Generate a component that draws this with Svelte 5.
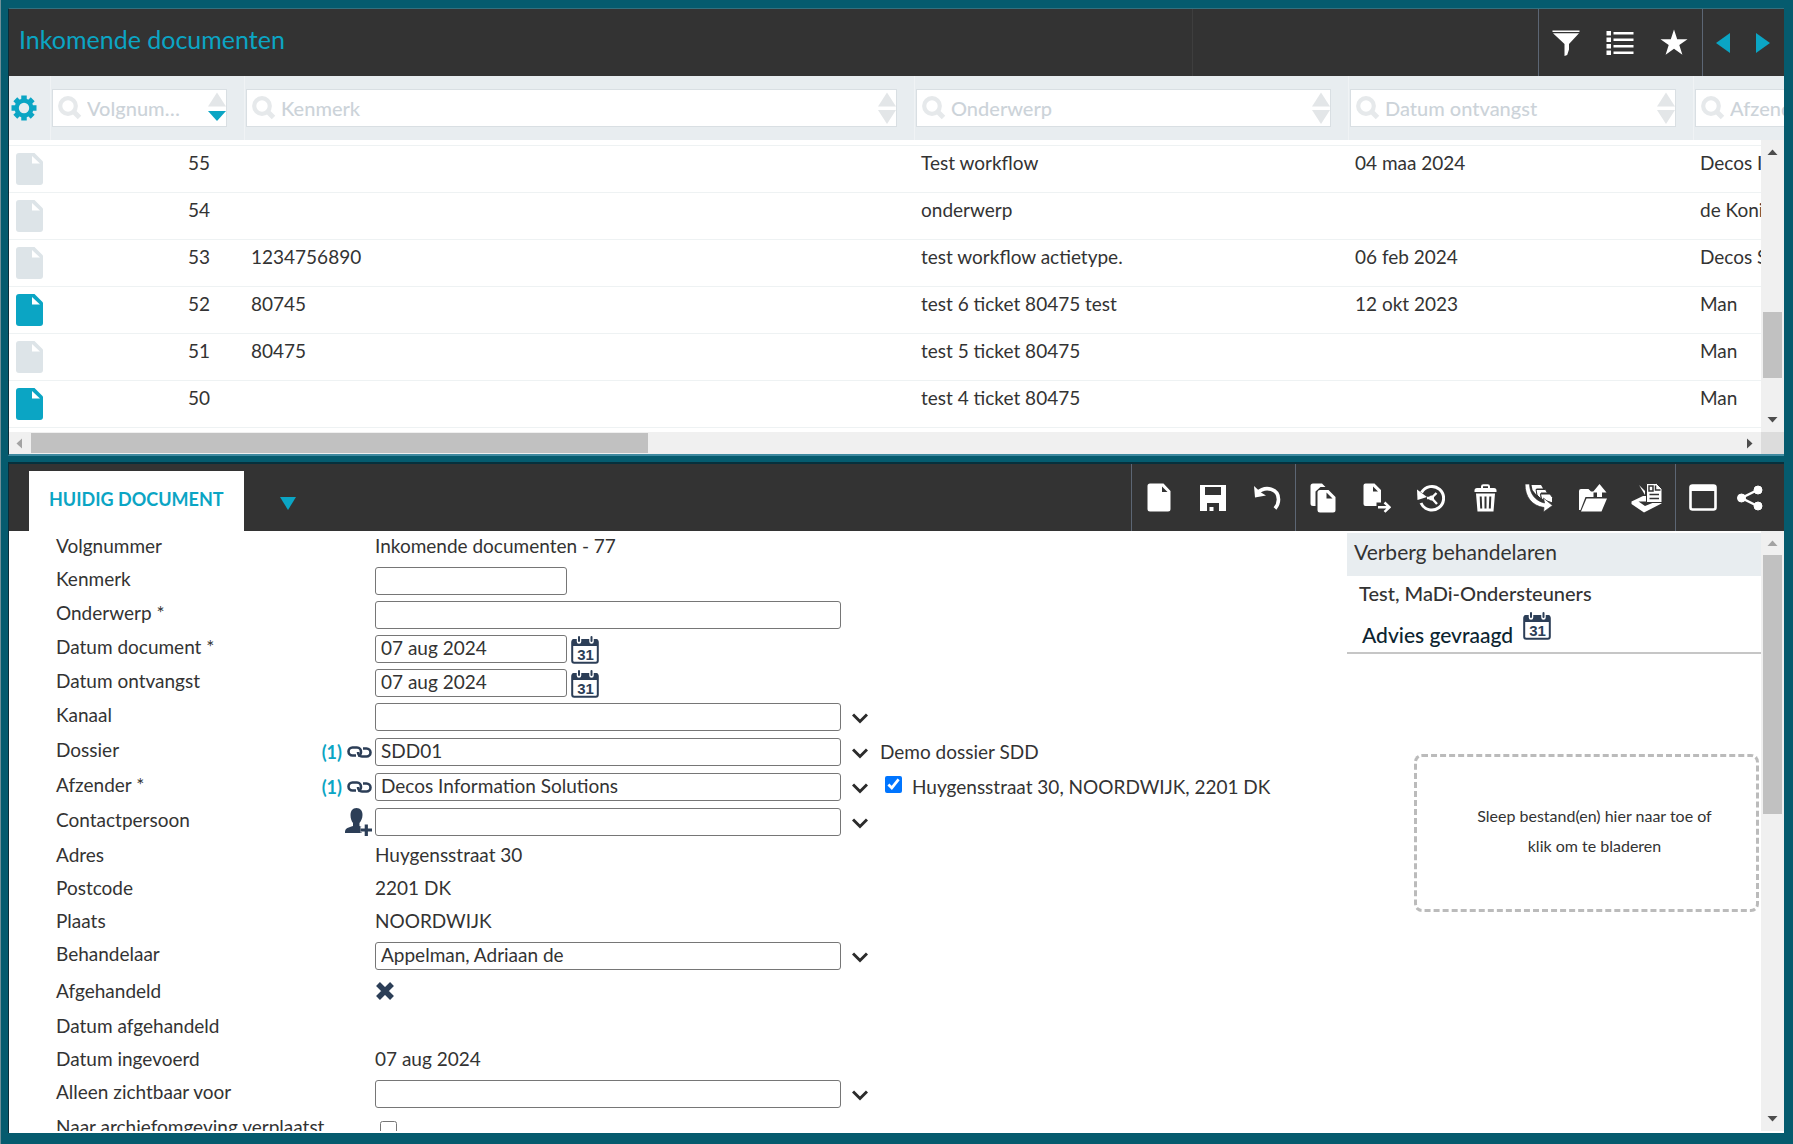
<script lang="ts">
    interface Column {
        key: string;
        label: string;
        sorted?: "down";
    }

    interface Field {
        id: string;
        label: string;
        kind: "text" | "short" | "long" | "date" | "lookup" | "cross" | "check";
        value?: string;
        links?: number;
        person?: boolean;
        note?: string;
        noteCheck?: boolean;
    }

    const columns: Column[] = [
        { key: "nr", label: "Volgnummer", sorted: "down" },
        { key: "kenmerk", label: "Kenmerk" },
        { key: "onderwerp", label: "Onderwerp" },
        { key: "ontvangst", label: "Datum ontvangst" },
        { key: "afzender", label: "Afzender" },
    ];

    const rows = [
        { nr: 55, kenmerk: "", onderwerp: "Test workflow", ontvangst: "04 maa 2024", afzender: "Decos Information", file: false },
        { nr: 54, kenmerk: "", onderwerp: "onderwerp", ontvangst: "", afzender: "de Koning", file: false },
        { nr: 53, kenmerk: "1234756890", onderwerp: "test workflow actietype.", ontvangst: "06 feb 2024", afzender: "Decos Solutions", file: false },
        { nr: 52, kenmerk: "80745", onderwerp: "test 6 ticket 80475 test", ontvangst: "12 okt 2023", afzender: "Man", file: true },
        { nr: 51, kenmerk: "80475", onderwerp: "test 5 ticket 80475", ontvangst: "", afzender: "Man", file: false },
        { nr: 50, kenmerk: "", onderwerp: "test 4 ticket 80475", ontvangst: "", afzender: "Man", file: true },
    ];

    let fields: Field[] = $state([
        { id: "volgnummer", label: "Volgnummer", kind: "text", value: "Inkomende documenten - 77" },
        { id: "kenmerk", label: "Kenmerk", kind: "short", value: "" },
        { id: "onderwerp", label: "Onderwerp *", kind: "long", value: "" },
        { id: "datum-document", label: "Datum document *", kind: "date", value: "07 aug 2024" },
        { id: "datum-ontvangst", label: "Datum ontvangst", kind: "date", value: "07 aug 2024" },
        { id: "kanaal", label: "Kanaal", kind: "lookup", value: "" },
        { id: "dossier", label: "Dossier", kind: "lookup", value: "SDD01", links: 1, note: "Demo dossier SDD" },
        {
            id: "afzender",
            label: "Afzender *",
            kind: "lookup",
            value: "Decos Information Solutions",
            links: 1,
            note: "Huygensstraat 30, NOORDWIJK, 2201 DK",
            noteCheck: true,
        },
        { id: "contactpersoon", label: "Contactpersoon", kind: "lookup", value: "", person: true },
        { id: "adres", label: "Adres", kind: "text", value: "Huygensstraat 30" },
        { id: "postcode", label: "Postcode", kind: "text", value: "2201 DK" },
        { id: "plaats", label: "Plaats", kind: "text", value: "NOORDWIJK" },
        { id: "behandelaar", label: "Behandelaar", kind: "lookup", value: "Appelman, Adriaan de" },
        { id: "afgehandeld", label: "Afgehandeld", kind: "cross" },
        { id: "datum-afgehandeld", label: "Datum afgehandeld", kind: "text", value: "" },
        { id: "datum-ingevoerd", label: "Datum ingevoerd", kind: "text", value: "07 aug 2024" },
        { id: "zichtbaar", label: "Alleen zichtbaar voor", kind: "lookup", value: "" },
        { id: "archief", label: "Naar archiefomgeving verplaatst", kind: "check" },
    ]);
</script>

{#snippet calendar()}
    <svg class="calendar" width="28" height="28" viewBox="0 0 28 28">
        <rect x="1.2" y="4.2" width="25.6" height="22.6" rx="2" fill="#fff" stroke="#2c3e57" stroke-width="2" />
        <path d="M1 10V4.5Q1 3 2.500 3H25.500Q27 3 27 4.500V10Z" fill="#2c3e57" />
        <path d="M8 0v5.500M20.500 0v5.500" stroke="#fff" stroke-width="4.500" stroke-linecap="round" />
        <path d="M8 1v4M20.500 1v4" stroke="#2c3e57" stroke-width="2" stroke-linecap="round" />
        <text x="14.500" y="23.500" text-anchor="middle">31</text>
    </svg>
{/snippet}

{#snippet tri(dir: string)}
    <svg class="tri" width="11" height="11" viewBox="0 0 11 11">
        {#if dir === "up"}<path d="M0.500 8 5.500 2.500 10.500 8z" />
        {:else if dir === "down"}<path d="M0.500 3 5.500 8.500 10.500 3z" />
        {:else if dir === "left"}<path d="M8 0.500 2.500 5.500 8 10.500z" />
        {:else}<path d="M3 0.500 8.500 5.500 3 10.500z" />{/if}
    </svg>
{/snippet}

<div class="app">
    <section class="panel list">
        <header class="bar">
            <h1>Inkomende documenten</h1>
            <div class="space"></div>
            <div class="group">
                <button aria-label="Filter">
                    <svg width="28" height="28" viewBox="0 0 28 28" fill="#fff">
                        <path d="M0.500 1.500h27v1.500h-27zM1 4.300h26L17 15v5.500l-1.800 5.500-2.700 1V15z" />
                    </svg>
                </button>
                <button aria-label="Lijst">
                    <svg width="28" height="28" viewBox="0 0 28 28" fill="#fff">
                        <path d="M.5 2h4.500v4.500H.5zM.5 8.500h4.500v4.500H.5zM.5 15h4.500v4.500H.5zM.5 21.500h4.500v4.500H.5zM7.500 3h20v2.500h-20zM7.500 9.500h20v2.500h-20zM7.500 16h20v2.500h-20zM7.500 22.500h20v2.500h-20z" />
                    </svg>
                </button>
                <button aria-label="Favoriet">
                    <svg width="28" height="28" viewBox="0 0 28 28" fill="#fff">
                        <path d="M14 .5l3.200 9.700H27.500L19.300 16l3.100 9.800L14 19.800 5.600 25.800 8.700 16 .5 10.200h10.300z" />
                    </svg>
                </button>
            </div>
            <div class="group">
                <button class="narrow" aria-label="Vorige">
                    <svg width="14" height="20" viewBox="0 0 14 20"><path d="M14 0v20L0 10z" fill="#0ba5c4" /></svg>
                </button>
                <button class="narrow" aria-label="Volgende">
                    <svg width="14" height="20" viewBox="0 0 14 20"><path d="M0 0v20l14-10z" fill="#0ba5c4" /></svg>
                </button>
            </div>
        </header>

        <div class="filters">
            <button class="gear" aria-label="Instellingen">
                <svg width="26" height="26" viewBox="0 0 26 26">
                    <g stroke="#0ba5c4" stroke-width="5.500">
                        <path d="M13 .5v25M.5 13h25" />
                        <path d="M4.300 4.300l17.400 17.400M21.700 4.300L4.300 21.700" />
                    </g>
                    <circle cx="13" cy="13" r="9.500" fill="#0ba5c4" />
                    <circle cx="13" cy="13" r="5.200" fill="#e8edf0" />
                </svg>
            </button>
            {#each columns as col}
                <div class="filter-cell">
                    <div class="filter">
                        <svg class="search" width="24" height="24" viewBox="0 0 24 24" fill="none" stroke="#e6e9eb">
                            <circle cx="10" cy="10" r="7.800" stroke-width="4.200" />
                            <path d="M15.500 15.500l6 6" stroke-width="5" />
                        </svg>
                        <input type="text" placeholder={col.label} aria-label={col.label} />
                        <button class="sort" aria-label="Sorteer op {col.label}">
                            <svg width="18" height="34" viewBox="0 0 18 34">
                                <path d="M9 1.500l9 14H0z" fill="#e3e6e8" />
                                <path
                                    d={col.sorted ? "M0 20h18l-9 10z" : "M0 19h18l-9 14z"}
                                    fill={col.sorted ? "#0ba5c4" : "#e3e6e8"}
                                />
                            </svg>
                        </button>
                    </div>
                </div>
            {/each}
        </div>

        <div class="list-body">
            <div class="table-wrap">
                <table>
                    <colgroup>
                        <col class="c-icon" />
                        <col class="c-nr" />
                        <col class="c-kenmerk" />
                        <col class="c-onderwerp" />
                        <col class="c-ontvangst" />
                        <col />
                    </colgroup>
                    <tbody>
                        {#each rows as row}
                            <tr>
                                <td class="icon-cell">
                                    <svg width="28" height="32" viewBox="0 0 28 32">
                                        <path
                                            d="M3 0H18.500L27 8.500V29a3 3 0 0 1-3 3H3a3 3 0 0 1-3-3V3a3 3 0 0 1 3-3z"
                                            fill={row.file ? "#0ba5c4" : "#dde4e8"}
                                        />
                                        <path d="M16 3v7.500h8z" fill="#fff" />
                                    </svg>
                                </td>
                                <td class="nr">{row.nr}</td>
                                <td>{row.kenmerk}</td>
                                <td>{row.onderwerp}</td>
                                <td>{row.ontvangst}</td>
                                <td>{row.afzender}</td>
                            </tr>
                        {/each}
                    </tbody>
                </table>
            </div>
            <div class="vscroll">
                {@render tri("up")}
                <div class="track list-track"><div class="thumb"></div></div>
                {@render tri("down")}
            </div>
        </div>
        <div class="hscroll">
            <span class="off">{@render tri("left")}</span>
            <div class="htrack"><div class="hthumb"></div></div>
            {@render tri("right")}
            <div class="corner"></div>
        </div>
    </section>

    <section class="panel detail">
        <header class="bar">
            <button class="tab">HUIDIG DOCUMENT</button>
            <button class="tab-menu" aria-label="Meer tabbladen">
                <svg width="16" height="13" viewBox="0 0 16 13"><path d="M0 0h16L8 13z" fill="#0ba5c4" /></svg>
            </button>
            <div class="space plain"></div>
            <div class="group">
                <button aria-label="Nieuw">
                    <svg width="24" height="29" viewBox="0 0 24 29">
                        <path d="M3 .5H16.500L23.500 8V26a2.500 2.500 0 0 1-2.500 2.500H3A2.500 2.500 0 0 1 .5 26V3A2.500 2.500 0 0 1 3 .5z" fill="#fff" />
                        <path d="M15 3.500V9h5.500z" fill="#333" />
                    </svg>
                </button>
                <button aria-label="Opslaan">
                    <svg width="26" height="26" viewBox="0 0 26 26">
                        <path d="M0 0h26v26H0z" fill="#fff" />
                        <path d="M5 2h16v8H5zM7 18h12v8H7z" fill="#333" />
                        <path d="M9.500 22h4v4h-4z" fill="#fff" />
                    </svg>
                </button>
                <button aria-label="Ongedaan maken">
                    <svg width="28" height="26" viewBox="0 0 28 26" fill="none" stroke="#fff">
                        <path d="M4 8C13 0 25.500 4 25.500 14.500c0 4-1 6-3.500 9" stroke-width="3.600" />
                        <path d="M1 1l1 11.500L13 10.500 8 7.500z" fill="#fff" stroke="none" />
                    </svg>
                </button>
            </div>
            <div class="group">
                <button aria-label="Kopieren">
                    <svg width="26" height="30" viewBox="0 0 26 30">
                        <path d="M3 .5h9L15.500 4H10.500L5.500 8.500V23H3A2.500 2.500 0 0 1 .5 20.500V3A2.500 2.500 0 0 1 3 .5z" fill="#fff" />
                        <path d="M10 7h8.500L25.500 14V27a2.500 2.500 0 0 1-2.500 2.500H10A2.500 2.500 0 0 1 7.500 27V9.500A2.500 2.500 0 0 1 10 7z" fill="#fff" />
                        <path d="M16.500 9.500V15.500h6z" fill="#333" />
                    </svg>
                </button>
                <button aria-label="Verplaatsen">
                    <svg width="28" height="30" viewBox="0 0 28 30">
                        <path d="M2.500.5H11.500L18 7V19.500H13.500V23H2.500A2 2 0 0 1 .5 21V2.500A2 2 0 0 1 2.500.5z" fill="#fff" />
                        <path d="M10 3.500V8.500h5z" fill="#333" />
                        <path d="M15 24.200h11.500M21.500 19.500l5 4.700-5 4.700" fill="none" stroke="#fff" stroke-width="2.500" />
                    </svg>
                </button>
                <button aria-label="Historie">
                    <svg width="28" height="28" viewBox="0 0 28 28" fill="none" stroke="#fff">
                        <path d="M4.500 8.500A11.800 11.800 0 1 1 4 19" stroke-width="3" />
                        <path d="M0 5.500l.5 10.500L10 13z" fill="#fff" stroke="none" />
                        <path d="M14.500 14l5-5M14.500 14l5.500 6M10 14h6" stroke-width="2.400" />
                        <circle cx="14.500" cy="14" r="2.500" fill="#fff" stroke="none" />
                    </svg>
                </button>
                <button aria-label="Verwijderen">
                    <svg width="23" height="28" viewBox="0 0 23 28">
                        <path d="M8 4.500V2.500Q8 1.200 9.300 1.200h4.400Q15 1.200 15 2.500v2" fill="none" stroke="#fff" stroke-width="2" />
                        <path d="M.5 8V6.500Q.5 4 3 4H20q2.500 0 2.500 2.500V8zM2 9.500h19L19.500 27.500h-16z" fill="#fff" />
                        <path d="M6.700 12.500l.5 12M11.500 12.500v12M16.300 12.500l-.5 12" stroke="#333" stroke-width="2" />
                    </svg>
                </button>
                <button aria-label="Doorsturen">
                    <svg width="28" height="28" viewBox="0 0 28 28">
                        <path d="M6.500 1h9.500l2 3.500h-6.500V11L7.500 6z" fill="#fff" />
                        <path d="M11 5.500h9.500l2 3.500h-6.500v6L12 11z" fill="#fff" stroke="#333" />
                        <path d="M15.500 10h9.500l2.500 3.500V19L16.500 15z" fill="#fff" stroke="#333" />
                        <path d="M0 0h4.500C5 10 10 16.500 19.500 19l-1-5L27.500 21.500 18.500 28l.5-4.500C7 22 0 13 0 0z" fill="#fff" stroke="#333" stroke-width=".7" />
                    </svg>
                </button>
                <button aria-label="Exporteren">
                    <svg width="28" height="28" viewBox="0 0 28 28" fill="#fff">
                        <path d="M0 26V7Q0 5 2 5H9.500l2.500 2.500h2.500V13H6.500L1.500 26zM7.500 14.500H28L22.500 27.500H2z" />
                        <path d="M20.500 0L27.500 8.500H23V13h-5V8.500h-4.500z" />
                    </svg>
                </button>
                <button aria-label="Scannen">
                    <svg width="32" height="30" viewBox="0 0 32 30" fill="#fff">
                        <path d="M8 2l6 6v4z" />
                        <path fill-rule="evenodd" d="M.5 18.500L12 13h18.500v7.500L13 29.500.5 21zM7.500 18.500l6.500 4.500 11-4.500z" />
                        <path d="M15.500.5h10L31 6V19.500H15.500z" stroke="#333" />
                        <path d="M18 3h4v5h-4zM24.500 2.500V7h5M18.500 11.500h9.500M18.500 15.500h9.500" fill="none" stroke="#333" stroke-width="1.500" />
                    </svg>
                </button>
            </div>
            <div class="group last">
                <button aria-label="Venster">
                    <svg width="28" height="27" viewBox="0 0 28 27">
                        <rect x="1.500" y="1.500" width="25" height="24" rx="2" fill="none" stroke="#fff" stroke-width="2.600" />
                        <path d="M1.500 2h25v5h-25z" fill="#fff" />
                    </svg>
                </button>
                <button class="narrow" aria-label="Delen">
                    <svg width="26" height="26" viewBox="0 0 26 26" fill="#fff" stroke="#fff">
                        <path d="M21.500 4.500L4.500 13l17 8.500" fill="none" stroke-width="2.500" />
                        <circle cx="21" cy="5" r="4" /><circle cx="4.500" cy="13" r="4" /><circle cx="21" cy="21" r="4" />
                    </svg>
                </button>
            </div>
        </header>

        <div class="detail-body">
            <form class="fields">
                {#each fields as field}
                    <div class="row {field.kind}">
                        {#if field.kind === "text" || field.kind === "cross"}
                            <span class="label">{field.label}</span>
                        {:else}
                            <label class="label" for={field.id}>{field.label}</label>
                        {/if}
                        <div class="aids">
                            {#if field.links}
                                <span class="count">({field.links})</span>
                                <svg width="25" height="12" viewBox="0 0 25 12" fill="none" stroke="#2c3e57" stroke-width="2.600">
                                    <path d="M9 9.500H5.500a4 4 0 0 1 0-8H10c2.500 0 4 2 4 4.500s-1.500 3.500-3 3.500" />
                                    <path d="M16 2.500h3.500a4 4 0 0 1 0 8H15c-2.500 0-4-2-4-4.500" />
                                </svg>
                            {:else if field.person}
                                <svg width="27" height="28" viewBox="0 0 27 28" fill="#2c3e57">
                                    <path d="M11.500 0c4 0 6 3 6 7 0 3.500-1.500 6-3 8v3l2.500 1v6H0c0-4 1-5 8-7v-3C6.500 13 5.500 10.500 5.500 7c0-4 2-7 6-7z" />
                                    <path d="M15.500 21.500h11M21 16v11.500" stroke="#fff" stroke-width="6" />
                                    <path d="M15.500 22H27M21.300 16.500V28" stroke="#2c3e57" stroke-width="3.200" />
                                </svg>
                            {/if}
                        </div>
                        {#if field.kind === "text"}
                            <span class="value">{field.value}</span>
                        {:else if field.kind === "cross"}
                            <svg class="cross" width="20" height="20" viewBox="0 0 20 20">
                                <path d="M3 3l14 14M17 3L3 17" stroke="#2c3e57" stroke-width="5.500" />
                            </svg>
                        {:else if field.kind === "check"}
                            <input id={field.id} class="tick" type="checkbox" />
                        {:else}
                            <input id={field.id} class="box" type="text" bind:value={field.value} />
                            {#if field.kind === "date"}
                                <button type="button" class="pick" aria-label="Kies datum">{@render calendar()}</button>
                            {:else if field.kind === "lookup"}
                                <button type="button" class="open" aria-label="Kies {field.label}">
                                    <svg width="16" height="11" viewBox="0 0 16 11" fill="none" stroke="#2b2b2b" stroke-width="3">
                                        <path d="M1 1.500l7 7 7-7" />
                                    </svg>
                                </button>
                            {/if}
                            {#if field.noteCheck}
                                <label class="note"><input type="checkbox" checked />{field.note}</label>
                            {:else if field.note}
                                <span class="note">{field.note}</span>
                            {/if}
                        {/if}
                    </div>
                {/each}
            </form>

            <aside>
                <button class="toggle">Verberg behandelaren</button>
                <div class="handler">
                    <div class="name">Test, MaDi-Ondersteuners</div>
                    <div class="step">
                        <span>Advies gevraagd</span>
                        {@render calendar()}
                    </div>
                </div>
                <button class="drop">Sleep bestand(en) hier naar toe of<br />klik om te bladeren</button>
            </aside>

            <div class="vscroll">
                <span class="off">{@render tri("up")}</span>
                <div class="track detail-track"><div class="thumb"></div></div>
                {@render tri("down")}
            </div>
        </div>
    </section>
</div>

<style>
    :global(body) {
        margin: 0;
        background: #055b6e;
    }

    .app {
        box-sizing: border-box;
        height: 100vh;
        padding: 8px 9px 11px 7px;
        display: flex;
        flex-direction: column;
        border-left: 1px solid #6f8f98;
        font-family: Lato, "Open Sans", sans-serif;
        font-size: 19px;
        line-height: 24px;
        color: #333;
    }

    button {
        padding: 0;
        border: 0;
        background: none;
        font: inherit;
        color: inherit;
        cursor: pointer;
        display: flex;
        align-items: center;
        justify-content: center;
    }
    input {
        font: inherit;
        color: inherit;
        margin: 0;
    }
    svg {
        display: block;
        flex: none;
    }

    .panel {
        display: flex;
        flex-direction: column;
        border-left: 1px solid #0a2c38;
        background: #fff;
        overflow: hidden;
    }
    .list {
        flex: none;
        border-top: 1px solid #33707f;
        border-bottom: 2px solid #3f8aa0;
    }
    .detail {
        flex: 1;
        min-height: 0;
        margin-top: 6px;
        border-top: 2px solid #06303c;
    }

    /* dark toolbars */
    .bar {
        flex: none;
        height: 67px;
        display: flex;
        background: #333;
    }
    h1 {
        flex: 1;
        margin: 0;
        padding: 14px 0 0 10px;
        font-size: 25px;
        line-height: 32px;
        font-weight: 400;
        color: #0ba5c4;
    }
    .space {
        width: 345px;
        border-left: 1px solid #3e3e3e;
    }
    .space.plain {
        flex: 1;
        border: 0;
    }
    .group {
        display: flex;
        border-left: 1px solid #5c6674;
        padding-right: 1px;
    }
    .group button {
        width: 54px;
    }
    .group button.narrow {
        width: 40px;
    }
    .group.last {
        padding-right: 14px;
    }
    .tab {
        align-self: flex-end;
        height: 60px;
        margin-left: 20px;
        padding: 0 20px 5px;
        background: #fff;
        font-size: 18px;
        font-weight: 700;
        color: #0ba5c4;
    }
    .tab-menu {
        width: 88px;
        padding-top: 12px;
    }

    /* column filters */
    .filters {
        display: grid;
        grid-template-columns: 41px 194px 670px 434px 345px minmax(240px, 1fr);
        height: 64px;
        background: #e8edf0;
    }
    .gear {
        padding-right: 12px;
    }
    .filter-cell {
        display: flex;
        align-items: center;
        padding: 0 17px 1px 1px;
        border-left: 1px solid #f0f3f5;
    }
    .filter {
        flex: 1;
        min-width: 0;
        height: 36px;
        display: flex;
        align-items: center;
        border: 1px solid #d9dfe3;
        background: #fff;
    }
    .search {
        margin: 0 3px 0 5px;
    }
    .filter input {
        flex: 1;
        min-width: 0;
        height: 34px;
        padding: 0 2px;
        border: 0;
        outline: 0;
        background: none;
        font-size: 20px;
        font-weight: 500;
        text-overflow: ellipsis;
    }
    .filter input::placeholder {
        color: #ccd3d9;
        opacity: 1;
    }
    .filter-cell:nth-child(2) input {
        margin-right: 12px;
    }
    .sort {
        width: 18px;
    }

    /* document rows */
    .list-body {
        display: flex;
        height: 292px;
    }
    .table-wrap {
        flex: 1;
        min-width: 0;
        overflow: hidden;
        padding-top: 5px;
    }
    table {
        width: 100%;
        table-layout: fixed;
        border-collapse: separate;
        border-spacing: 0;
        border-top: 1px solid #eef2f3;
    }
    .c-icon {
        width: 41px;
    }
    .c-nr {
        width: 194px;
    }
    .c-kenmerk {
        width: 670px;
    }
    .c-onderwerp {
        width: 434px;
    }
    .c-ontvangst {
        width: 345px;
    }
    td {
        box-sizing: border-box;
        height: 47px;
        padding: 5px 0 0 7px;
        border-bottom: 1px solid #eef2f3;
        vertical-align: top;
        white-space: nowrap;
        overflow: hidden;
    }
    td.icon-cell {
        padding-top: 7px;
    }
    td.nr {
        padding-right: 34px;
        text-align: right;
    }

    /* scrollbars */
    .vscroll {
        flex: none;
        box-sizing: border-box;
        width: 23px;
        padding: 7px 2px;
        display: flex;
        flex-direction: column;
        align-items: center;
        background: #f0f0f0;
    }
    .tri {
        fill: #4d4d4d;
    }
    .off .tri {
        fill: #a3a3a3;
    }
    .track {
        flex: 1;
        width: 100%;
        display: flex;
        flex-direction: column;
        margin: 6px 0;
    }
    .thumb {
        background: #c1c1c1;
    }
    .list-track::before {
        content: "";
        flex: 150;
    }
    .list-track .thumb {
        flex: 67;
    }
    .list-track::after {
        content: "";
        flex: 31;
    }
    .detail-track .thumb {
        height: 47%;
    }
    .hscroll {
        display: flex;
        align-items: center;
        height: 22px;
        background: #f0f0f0;
    }
    .hscroll .off {
        margin: 0 6px 0 5px;
    }
    .htrack {
        flex: 1;
    }
    .hthumb {
        width: 36%;
        height: 20px;
        background: #c1c1c1;
    }
    .corner {
        width: 23px;
        height: 22px;
        margin-left: 6px;
        background: #dcdcdc;
    }

    /* document form */
    .detail-body {
        flex: 1;
        min-height: 0;
        margin-bottom: 2px;
        display: flex;
        overflow: hidden;
    }
    .fields {
        flex: 1;
        min-width: 0;
        padding-top: 3px;
    }
    .row {
        display: flex;
        height: 34px;
        white-space: nowrap;
    }
    .row.text {
        height: 33px;
    }
    .row.lookup,
    .row.cross {
        height: 35px;
    }
    .label {
        width: 271px;
        padding-left: 47px;
    }
    .aids {
        width: 45px;
        height: 28px;
        padding-right: 3px;
        display: flex;
        align-items: center;
        justify-content: flex-end;
        gap: 5px;
    }
    .count {
        font-size: 18px;
        font-weight: 700;
        color: #0ba5c4;
    }
    .box {
        box-sizing: border-box;
        width: 466px;
        height: 28px;
        padding: 0 5px 3px;
        border: 1px solid #767676;
        border-radius: 3px;
        background: #fff;
    }
    .short .box,
    .date .box {
        width: 192px;
    }
    .pick {
        width: 28px;
        height: 30px;
        margin-left: 4px;
    }
    .calendar text {
        font: 700 15px "Liberation Sans", sans-serif;
        fill: #2c3e57;
    }
    .open {
        width: 38px;
        height: 30px;
    }
    .note {
        display: flex;
        padding: 2px 0 0 1px;
    }
    .note input {
        width: 17px;
        height: 17px;
        margin: 1px 10px 0 5px;
    }
    .cross {
        margin-top: 2px;
    }
    .tick {
        width: 17px;
        height: 17px;
        margin: 6px 0 0 5px;
    }

    /* handlers and upload */
    aside {
        width: 414px;
        padding-top: 2px;
    }
    .toggle {
        width: 100%;
        height: 43px;
        padding: 0 7px 5px;
        justify-content: flex-start;
        background: #e8edf0;
        font-size: 21px;
    }
    .handler {
        padding: 5px 12px 0;
        border-bottom: 2px solid #c6c6c6;
        font-size: 20px;
        font-weight: 500;
    }
    .step {
        display: flex;
        gap: 10px;
        padding: 7px 3px 5px;
        font-size: 21px;
        color: #0c2430;
    }
    .step span {
        padding-top: 11px;
    }
    .drop {
        width: 345px;
        height: 158px;
        margin: 100px 2px 0 auto;
        padding: 0 0 4px 16px;
        border: 3px dashed #bbb;
        border-radius: 8px;
        font-size: 16px;
        line-height: 30px;
    }
</style>
